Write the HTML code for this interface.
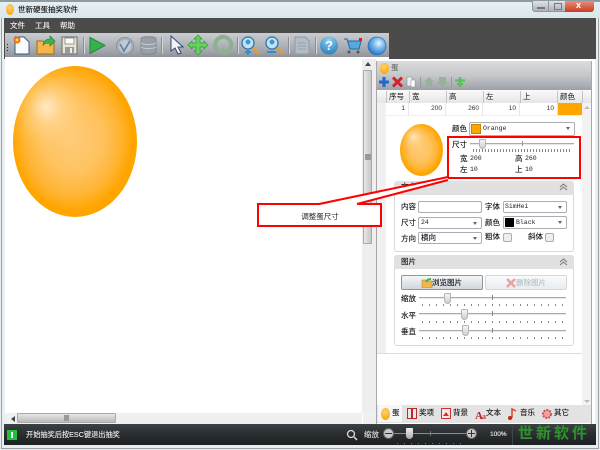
<!DOCTYPE html>
<html><head><meta charset="utf-8"><style>
html,body{margin:0;padding:0;background:#fff}
#w{position:relative;width:600px;height:450px;overflow:hidden;background:#e9eef1;font:7.5px "Liberation Sans","Noto Sans CJK SC",sans-serif;color:#111}
#w div,#w svg,#w span.a{position:absolute}
.t{white-space:nowrap;line-height:10px;-webkit-text-stroke:.12px currentColor}
.inp{background:#fff;border:1px solid #abadb3;border-radius:2px;box-sizing:border-box;height:12px}
.sel:after{content:"";position:absolute;right:4px;top:4px;border:2px solid transparent;border-top:3px solid #666}
.mono{font-family:"Liberation Mono","Noto Sans CJK SC",monospace;font-size:6.5px;line-height:10px;color:#222;white-space:nowrap}
.th{top:91px;height:12px;line-height:12px;border-left:1px solid #c4c4c4;padding-left:2px;font-size:7.5px}
.td{top:103px;height:12px;line-height:12px;text-align:right;font-size:6.5px;color:#333;border-right:1px solid #e8e8e8;box-sizing:border-box;padding-right:3px;background:#fff}
.line{height:1px;background:#aaa;border-bottom:1px solid #e8e8e8}
.th2{width:7px;height:11px;background:linear-gradient(#f4f4f4,#cfcfcf);border:1px solid #b5b5b5;border-radius:1px 1px 4px 4px;box-sizing:border-box}
.ticks{height:2px;background:repeating-linear-gradient(90deg,#888 0 1px,transparent 1px 7px)}
.sec{background:#e1e1e1;border-radius:3px 3px 0 0;height:14px;left:394px}
.box{left:394px;width:180px;background:#fff;border:1px solid #d8d8d8;border-radius:3px;box-sizing:border-box}
</style></head><body><div id="w">
<!-- frame & title -->
<div style="left:0;top:0;width:600px;height:2px;background:#8f9ba1"></div>
<div style="left:0;top:2px;width:600px;height:16px;background:linear-gradient(#e6f0f4,#d9e6ec)"></div>
<div style="left:1px;top:18px;width:1px;height:430px;background:#9aa2a6"></div>
<div style="left:598px;top:18px;width:1px;height:430px;background:#9aa2a6"></div>
<div style="left:1px;top:448px;width:598px;height:1px;background:#9aa2a6"></div>
<div style="left:6px;top:4px;width:8px;height:11px;border-radius:50%;background:radial-gradient(circle at 45% 35%,#ffd27a,#ffa500 80%)"></div>
<div class="t" style="left:18px;top:5px;color:#111">世新硬蛋抽奖软件</div>
<!-- window btns -->
<div style="left:532px;top:1px;width:17px;height:11px;background:linear-gradient(#dfe3e6,#aab2b8);border:1px solid #8e969c;border-top:0;border-radius:0 0 0 3px;box-sizing:border-box"></div>
<div style="left:537px;top:7px;width:8px;height:2px;background:#eef;border:1px solid #777;box-sizing:border-box"></div>
<div style="left:549px;top:1px;width:16px;height:11px;background:linear-gradient(#dfe3e6,#aab2b8);border-bottom:1px solid #8e969c;box-sizing:border-box"></div>
<div style="left:554px;top:3px;width:8px;height:7px;border:1px solid #777;box-sizing:border-box"></div>
<div style="left:565px;top:1px;width:29px;height:11px;background:linear-gradient(#e8907a,#c83a20);border-radius:0 0 3px 0"></div>
<div class="t" style="left:576px;top:0;color:#fff;font-size:9px;font-weight:bold">x</div>
<!-- dark menu -->
<div style="left:4px;top:18px;width:592px;height:41px;background:#4b4b4b"></div>
<div class="t" style="left:10px;top:21px;color:#eee">文件</div>
<div class="t" style="left:35px;top:21px;color:#eee">工具</div>
<div class="t" style="left:60px;top:21px;color:#eee">帮助</div>
<!-- toolbar -->
<div style="left:5px;top:33px;width:384px;height:24px;background:linear-gradient(#c9ccd0,#a2a6ac 75%,#8f9399)"></div>
<svg style="left:0;top:0" width="400" height="60" viewBox="0 0 400 60">
<defs><radialGradient id="gl" cx=".6" cy=".35" r=".7"><stop offset="0" stop-color="#eef8ff"/><stop offset=".4" stop-color="#7cc0f0"/><stop offset="1" stop-color="#1f6fc0"/></radialGradient>
<radialGradient id="hp" cx=".5" cy=".2" r=".9"><stop offset="0" stop-color="#8fd0f2"/><stop offset="1" stop-color="#1c78b8"/></radialGradient></defs>
<g fill="#222"><rect x="7" y="44" width="1" height="1"/><rect x="7" y="47" width="1" height="1"/><rect x="7" y="50" width="1" height="1"/></g>
<path d="M15 37h9l5 5v12H15z" fill="#fafcff" stroke="#37598a"/><circle cx="17" cy="40" r="3.5" fill="#f26a1b"/><circle cx="17" cy="40" r="1.5" fill="#ffe040"/>
<path d="M37 41h6l2 2h9v11H37z" fill="#f5b54a" stroke="#a86a12"/><path d="M43 45c1-5 4-6 7-6v-3l5 5-5 5v-3c-3 0-5 0-7 2z" fill="#3cb64a" stroke="#1d7a2c" stroke-width=".6"/>
<path d="M62 37h15v17H62z" fill="#e9e3cf" stroke="#6d6d6d"/><rect x="65" y="38" width="9" height="6" fill="#fafafa" stroke="#999"/><rect x="65" y="47" width="9" height="7" fill="#999"/><rect x="70" y="48" width="2" height="5" fill="#eee"/>
<rect x="83" y="37" width="1" height="17" fill="#8a8e93"/><rect x="84" y="37" width="1" height="17" fill="#d5d8da"/>
<path d="M90 37.500l15 8-15 8z" fill="#35b34a" stroke="#1f8a33"/>
<circle cx="125" cy="46" r="8.5" fill="#a9b3bd" stroke="#87919b"/><circle cx="125" cy="46" r="6" fill="#c2c9cf"/><path d="M120 44l4 7 6-10" fill="none" stroke="#5c80a8" stroke-width="1.6"/>
<path d="M141 39c0-3 15-3 15 0v13c0 3-15 3-15 0z" fill="#98a0a7" stroke="#81888f"/><path d="M141 43c3 2 12 2 15 0M141 47c3 2 12 2 15 0" fill="none" stroke="#c8ced2"/>
<rect x="161" y="37" width="1" height="17" fill="#8a8e93"/><rect x="162" y="37" width="1" height="17" fill="#d5d8da"/>
<path d="M171 36v15l4-3 3 6 3-1-3-6h5z" fill="#f2f4f7" stroke="#34496b"/>
<path d="M198 35l4 4h-2v4h4v-2l4 4-4 4v-2h-4v4h2l-4 4-4-4h2v-4h-4v2l-4-4 4-4v2h4v-4h-2z" fill="#67d15c" stroke="#2e9d35" stroke-width=".7"/>
<path d="M218 51a8 8 0 1 1 9 1" fill="none" stroke="#8db08f" stroke-width="4"/><path d="M222 47v8h8z" fill="#8db08f"/>
<rect x="237" y="37" width="1" height="17" fill="#8a8e93"/><rect x="238" y="37" width="1" height="17" fill="#d5d8da"/>
<circle cx="248" cy="43" r="6" fill="#c2e3f5" stroke="#2a6e9e" stroke-width="1.2"/><circle cx="248" cy="42" r="2.500" fill="#3c9ad6"/><path d="M253 48l6 6" stroke="#e89a2a" stroke-width="2"/><path d="M248 49v6m-3-3h6" stroke="#2b8fd0" stroke-width="2" fill="none"/>
<circle cx="272" cy="43" r="6" fill="#c2e3f5" stroke="#2a6e9e" stroke-width="1.2"/><circle cx="272" cy="42" r="2.500" fill="#3c9ad6"/><path d="M277 48l6 6" stroke="#e89a2a" stroke-width="2"/><path d="M267 52h9" stroke="#2b8fd0" stroke-width="2"/>
<rect x="288" y="37" width="1" height="17" fill="#8a8e93"/><rect x="289" y="37" width="1" height="17" fill="#d5d8da"/>
<path d="M295 37h10l4 4v13h-14z" fill="#b3bdc8" stroke="#929ca7"/><path d="M298 43h8M298 46h8M298 49h8" stroke="#98a2ad"/>
<rect x="315" y="37" width="1" height="17" fill="#8a8e93"/><rect x="316" y="37" width="1" height="17" fill="#d5d8da"/>
<circle cx="329" cy="45.500" r="9" fill="url(#hp)"/>
<text x="329" y="50" text-anchor="middle" font-family="Liberation Sans" font-size="13" font-weight="bold" fill="#fff">?</text>
<path d="M344 39h3l3 10h9l2-8h-13" fill="#58a8e0" stroke="#1e6ea5"/><circle cx="349" cy="52" r="1.500" fill="#555"/><circle cx="358" cy="52" r="1.500" fill="#555"/><rect x="359" y="38" width="3" height="3" fill="#d22"/>
<circle cx="377" cy="46" r="9" fill="url(#gl)" stroke="#2a70b8" stroke-width=".7"/>
</svg>
<!-- main content -->
<div style="left:5px;top:57px;width:384px;height:368px;background:#fff"></div>
<div style="left:5px;top:59px;width:590px;height:366px;background:#fff"></div>
<div style="left:13px;top:66px;width:124px;height:151px;border-radius:50%;background:radial-gradient(ellipse 36% 32% at 27% 27%,rgba(255,236,208,.92) 0,rgba(255,226,176,.5) 35%,rgba(255,214,140,.18) 70%,rgba(255,210,130,0) 100%),radial-gradient(ellipse closest-side at 48% 48%,#ffcb78 0,#ffc25e 50%,#ffb432 80%,#ffa500 100%)"></div>
<!-- left side scrollbars -->
<div style="left:5px;top:413px;width:357px;height:11px;background:#f0f0f0"></div>
<div style="left:11px;top:416px;border:3px solid transparent;border-right:4px solid #444;border-left:0"></div>
<div style="left:17px;top:413px;width:99px;height:10px;background:linear-gradient(#e6e6e6,#bbb);border:1px solid #aaa;box-sizing:border-box;border-radius:1px"></div>
<div style="left:64px;top:415px;width:5px;height:6px;background:#999"></div>
<div style="left:362px;top:59px;width:14px;height:354px;background:#eee"></div>
<div style="left:365px;top:62px;border:3px solid transparent;border-bottom:4px solid #444;border-top:0"></div>
<div style="left:363px;top:70px;width:9px;height:174px;background:linear-gradient(90deg,#e8e8e8,#c6c6c6);border:1px solid #aaa;box-sizing:border-box;border-radius:1px"></div>
<div style="left:365px;top:154px;width:6px;height:6px;background:#999"></div>
<div style="left:363px;top:410px;width:14px;height:14px;background:#f0f0f0"></div>
<!-- right panel -->
<div style="left:376px;top:61px;width:216px;height:364px;background:#fff;border:1px solid #a8a8a8;box-sizing:border-box"></div>
<div style="left:377px;top:61px;width:214px;height:29px;background:linear-gradient(#dcdcdc,#c5c7ca 50%,#9da1a7)"></div>
<div style="left:380px;top:63px;width:9px;height:11px;border-radius:50%;background:radial-gradient(circle at 45% 35%,#ffd27a,#ffa500 80%)"></div>
<div class="t" style="left:391px;top:63px;color:#666">蛋</div>
<svg style="left:378px;top:74px" width="100" height="16" viewBox="0 0 100 16">
<path d="M6 3v10M1 8h10" stroke="#1f66cf" stroke-width="3"/>
<path d="M15 3.500l9 9m0-9l-9 9" stroke="#d2222a" stroke-width="3"/>
<path d="M29 3h5v9h-5z" fill="#eee" stroke="#888" stroke-width=".5"/><path d="M33 6h4v7h-4z" fill="#fff" stroke="#888" stroke-width=".5"/>
<rect x="42" y="3" width="1" height="11" fill="#999"/>
<path d="M51 3l5 5h-2v4h-6V8h-2z" fill="#95b398"/><path d="M61 3h7v5h2l-5.500 5-5.500-5h2z" fill="#95b398"/>
<rect x="73" y="3" width="1" height="11" fill="#999"/>
<path d="M82 3v10M77 6.500h10M79 10h6" stroke="#5ac25a" stroke-width="2.300" fill="none"/>
</svg>
<!-- table -->
<div style="left:377px;top:90px;width:214px;height:13px;background:linear-gradient(#fafafa,#e6e6e6)"></div>
<div class="th" style="left:386px">序号</div><div class="th" style="left:409px">宽</div><div class="th" style="left:446px">高</div><div class="th" style="left:483px">左</div><div class="th" style="left:520px">上</div><div class="th" style="left:557px">颜色</div>
<div style="left:582px;top:91px;height:12px;width:1px;background:#c4c4c4"></div>
<div style="left:377px;top:103px;width:9px;height:250px;background:#f1f1f1"></div>
<div class="td" style="left:386px;width:23px">1</div><div class="td" style="left:409px;width:37px">200</div><div class="td" style="left:446px;width:37px">260</div><div class="td" style="left:483px;width:37px">10</div><div class="td" style="left:520px;width:38px">10</div>
<div style="left:558px;top:103px;width:24px;height:12px;background:#ffa500"></div>
<div style="left:582px;top:103px;width:9px;height:303px;background:#f2f2f2"></div>
<div style="left:584px;top:106px;border:3px solid transparent;border-bottom:3px solid #bbb;border-top:0"></div>
<div style="left:584px;top:400px;border:3px solid transparent;border-top:3px solid #bbb;border-bottom:0"></div>
<div style="left:386px;top:115px;width:196px;height:1px;background:#eee"></div>
<div style="left:377px;top:353px;width:205px;height:1px;background:#ddd"></div>
<!-- egg preview -->
<div style="left:400px;top:124px;width:43px;height:52px;border-radius:50%;background:radial-gradient(ellipse 36% 32% at 32% 25%,rgba(255,232,200,.9) 0,rgba(255,226,176,.45) 35%,rgba(255,214,140,.15) 70%,rgba(255,210,130,0) 100%),radial-gradient(ellipse closest-side at 48% 48%,#ffcb78 0,#ffc25e 50%,#ffb432 80%,#ffa500 100%)"></div>
<div class="t" style="left:452px;top:124px">颜色</div>
<div class="inp sel" style="left:469px;top:122px;width:106px;height:14px"></div>
<div style="left:471px;top:124px;width:10px;height:10px;background:#ffa500;border:1px solid #c98200;box-sizing:border-box"></div>
<div class="mono" style="left:483px;top:124px">Orange</div>
<div class="t" style="left:452px;top:140px">尺寸</div>
<div class="line" style="left:470px;top:143px;width:104px"></div>
<div style="left:522px;top:141px;width:1px;height:5px;background:#999"></div>
<div class="th2" style="left:479px;top:139px;height:10px"></div>
<div class="ticks" style="left:473px;top:149px;width:98px;height:3px;background:repeating-linear-gradient(90deg,#888 0 1px,transparent 1px 3px)"></div>
<div class="t" style="left:460px;top:154px">宽</div><div class="mono" style="left:470px;top:154px">200</div>
<div class="t" style="left:515px;top:154px">高</div><div class="mono" style="left:525px;top:154px">260</div>
<div class="t" style="left:460px;top:165px">左</div><div class="mono" style="left:470px;top:165px">10</div>
<div class="t" style="left:515px;top:165px">上</div><div class="mono" style="left:525px;top:165px">10</div>
<!-- text group -->
<div class="box" style="top:181px;height:71px"></div>
<div class="sec" style="top:181px;width:180px"></div>
<div class="t" style="left:401px;top:182px">文本</div>
<svg style="left:559px;top:183px" width="9" height="8"><path d="M1 4l3.500-3 3.500 3M1 7l3.500-3 3.500 3" fill="none" stroke="#777"/></svg>
<div class="t" style="left:401px;top:202px">内容</div>
<div class="inp" style="left:418px;top:201px;width:64px"></div>
<div class="t" style="left:485px;top:202px">字体</div>
<div class="inp sel" style="left:503px;top:201px;width:64px"></div><div class="mono" style="left:505px;top:202px">SimHei</div>
<div class="t" style="left:401px;top:218px">尺寸</div>
<div class="inp sel" style="left:418px;top:217px;width:64px"></div><div class="mono" style="left:421px;top:218px">24</div>
<div class="t" style="left:485px;top:218px">颜色</div>
<div class="inp sel" style="left:503px;top:216px;width:64px;height:13px"></div>
<div style="left:505px;top:218px;width:9px;height:9px;background:#000"></div><div class="mono" style="left:516px;top:218px">Black</div>
<div class="t" style="left:401px;top:234px">方向</div>
<div class="inp sel" style="left:418px;top:232px;width:64px"></div><div class="t" style="left:421px;top:233px">横向</div>
<div class="t" style="left:485px;top:232px">粗体</div>
<div class="inp" style="left:503px;top:233px;width:9px;height:9px;background:#eee"></div>
<div class="t" style="left:528px;top:232px">斜体</div>
<div class="inp" style="left:545px;top:233px;width:9px;height:9px;background:#eee"></div>
<!-- image group -->
<div class="box" style="top:255px;height:91px"></div>
<div class="sec" style="top:255px;width:180px"></div>
<div class="t" style="left:401px;top:257px">图片</div>
<svg style="left:559px;top:258px" width="9" height="8"><path d="M1 4l3.500-3 3.500 3M1 7l3.500-3 3.500 3" fill="none" stroke="#777"/></svg>
<div style="left:401px;top:275px;width:82px;height:15px;background:linear-gradient(#f4f7f9,#cfd6dc);border:1px solid #8e969c;border-radius:2px;box-sizing:border-box"></div>
<svg style="left:421px;top:277px" width="12" height="11"><path d="M1 3h4l1 1h5v7H1z" fill="#f5b54a" stroke="#b07a20" stroke-width=".5"/><path d="M5 5c1-2 3-3 5-3" stroke="#3cb64a" stroke-width="2" fill="none"/></svg>
<div class="t" style="left:432px;top:278px">浏览图片</div>
<div style="left:485px;top:275px;width:82px;height:15px;background:linear-gradient(#fafbfc,#e9edf0);border:1px solid #d5d8db;border-radius:2px;box-sizing:border-box"></div>
<svg style="left:506px;top:278px" width="10" height="10"><path d="M1 1l8 8m0-8l-8 8" stroke="#efa0a0" stroke-width="2.500"/></svg>
<div class="t" style="left:516px;top:278px;color:#b5c0c5">删除图片</div>
<div class="t" style="left:401px;top:294px">缩放</div>
<div class="line" style="left:419px;top:297px;width:147px"></div><div style="left:492px;top:295px;width:1px;height:5px;background:#888"></div><div class="th2" style="left:444px;top:293px"></div><div class="ticks" style="left:422px;top:304px;width:142px"></div>
<div class="t" style="left:401px;top:311px">水平</div>
<div class="line" style="left:419px;top:313px;width:147px"></div><div style="left:492px;top:311px;width:1px;height:5px;background:#888"></div><div class="th2" style="left:461px;top:309px"></div><div class="ticks" style="left:422px;top:321px;width:142px"></div>
<div class="t" style="left:401px;top:327px">垂直</div>
<div class="line" style="left:419px;top:330px;width:147px"></div><div style="left:492px;top:328px;width:1px;height:5px;background:#888"></div><div class="th2" style="left:462px;top:325px"></div><div class="ticks" style="left:422px;top:337px;width:142px"></div>
<!-- tabs -->
<div style="left:377px;top:405px;width:214px;height:18px;background:#e3e3e3"></div>
<div style="left:378px;top:405px;width:24px;height:17px;background:#f6f6f6"></div>
<div style="left:381px;top:408px;width:9px;height:12px;border-radius:50%;background:radial-gradient(circle at 45% 35%,#ffd27a,#ffa500 80%)"></div>
<div class="t" style="left:392px;top:408px">蛋</div>
<svg style="left:406px;top:407px" width="190" height="15" viewBox="0 0 190 15">
<rect x="1.500" y="1.500" width="9" height="10" fill="#e8e8f0" stroke="#b03030"/><rect x="5" y="2" width="2" height="10" fill="#c22"/>
<rect x="35.500" y="1.500" width="9" height="10" fill="#f8e8e8" stroke="#c33"/><path d="M37 9l3-4 3 4z" fill="#c33"/>
<text x="69" y="12" font-family="Liberation Serif" font-size="11" font-weight="bold" fill="#b82424">A</text><text x="76" y="12" font-family="Liberation Serif" font-size="8" font-weight="bold" fill="#c33">a</text>
<path d="M106 11V2l4 2" fill="none" stroke="#d42" stroke-width="1.500"/><circle cx="104" cy="11" r="2" fill="#c21"/>
<circle cx="141" cy="7" r="4" fill="#f2a0a0" stroke="#d05050" stroke-width="2" stroke-dasharray="2 1"/>
</svg>
<div class="t" style="left:419px;top:408px">奖项</div>
<div class="t" style="left:453px;top:408px">背景</div>
<div class="t" style="left:486px;top:408px">文本</div>
<div class="t" style="left:520px;top:408px">音乐</div>
<div class="t" style="left:554px;top:408px">其它</div>
<!-- status -->
<div style="left:4px;top:424px;width:592px;height:21px;background:linear-gradient(#3c4144,#2a2e31 45%,#1d2022)"></div>
<div style="left:7px;top:430px;width:10px;height:10px;background:#1fc23c"></div>
<div style="left:11px;top:432px;width:2px;height:6px;background:#fff"></div>
<div class="t" style="left:26px;top:430px;color:#eee;font-size:7.2px">开始抽奖后按ESC键退出抽奖</div>
<svg style="left:346px;top:429px" width="12" height="12"><circle cx="5" cy="5" r="3.500" fill="none" stroke="#ddd" stroke-width="1.300"/><path d="M8 8l3 3" stroke="#ddd" stroke-width="1.500"/></svg>
<div class="t" style="left:364px;top:430px;color:#ddd">缩放</div>
<div style="left:388px;top:433px;width:84px;height:1px;background:#8a8d8f"></div>
<div style="left:383px;top:428px;width:11px;height:11px;border-radius:50%;background:#c8c8c8;border:1px solid #666;box-sizing:border-box"></div><div style="left:385px;top:433px;width:7px;height:1px;background:#333"></div>
<div style="left:466px;top:428px;width:11px;height:11px;border-radius:50%;background:#c8c8c8;border:1px solid #666;box-sizing:border-box"></div><div style="left:468px;top:433px;width:7px;height:1px;background:#333"></div><div style="left:471px;top:430px;width:1px;height:7px;background:#333"></div>
<div style="left:406px;top:428px;width:7px;height:11px;background:linear-gradient(#eee,#aaa);border-radius:1px 1px 4px 4px"></div>
<div style="left:430px;top:431px;width:1px;height:5px;background:#777"></div>
<div class="ticks" style="left:397px;top:443px;width:66px;height:1px;background:repeating-linear-gradient(90deg,#777 0 1px,transparent 1px 7px)"></div>
<div class="t" style="left:490px;top:430px;color:#eee;font-size:6.5px">100%</div>
<div style="left:512px;top:425px;width:1px;height:20px;background:#3f4547"></div>
<div class="t" style="left:518px;top:425px;color:#2e902e;font-size:15px;line-height:18px;letter-spacing:3px;font-weight:bold">世新软件</div>
<!-- annotation -->
<svg style="left:0;top:0" width="600" height="450" viewBox="0 0 600 450">
<rect x="448" y="137" width="132" height="41" fill="none" stroke="#f00" stroke-width="2"/>
<rect x="258" y="204" width="123" height="22" fill="#fff" stroke="#f00" stroke-width="2"/>
<path d="M319 205L448 178 448 180 357 205z" fill="#fff"/>
<path d="M319 204L448 177M357 204L448 180" fill="none" stroke="#f00" stroke-width="2"/>
<text x="320" y="219" text-anchor="middle" font-family="Liberation Sans,Noto Sans CJK SC,sans-serif" font-size="7.5" fill="#222">调整蛋尺寸</text>
</svg>
</div></body></html>
